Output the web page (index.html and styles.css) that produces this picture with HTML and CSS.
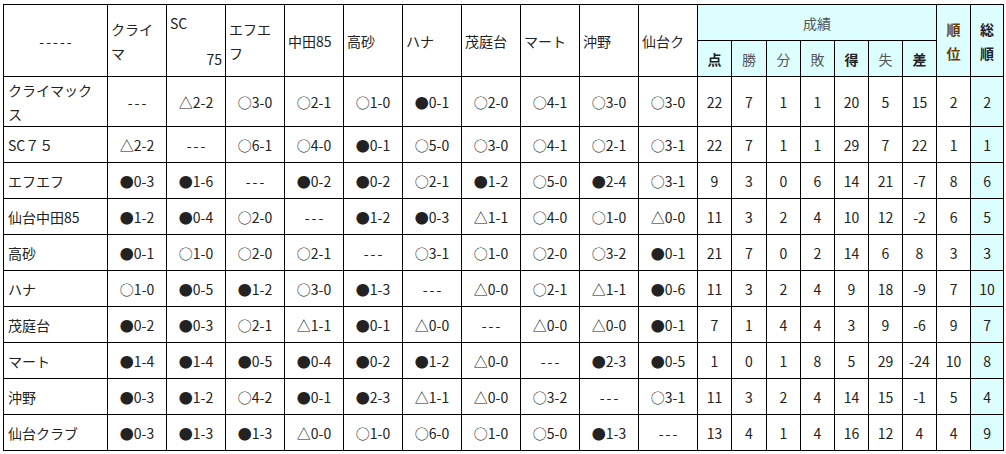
FILE: index.html
```html
<!DOCTYPE html>
<html lang="ja">
<head>
<meta charset="utf-8">
<title>成績表</title>
<link rel="stylesheet" href="styles.css">
</head>
<body>
<table class="sheet">
  <colgroup>
    <col class="c-name">
    <col class="c-team"><col class="c-team"><col class="c-team"><col class="c-team"><col class="c-team">
    <col class="c-team"><col class="c-team"><col class="c-team"><col class="c-team"><col class="c-team">
    <col class="c-stat"><col class="c-stat2"><col class="c-stat"><col class="c-stat"><col class="c-stat"><col class="c-stat"><col class="c-stat">
    <col class="c-stat"><col class="c-last">
  </colgroup>
  <thead>
    <tr class="h1">
      <th rowspan="2" class="corner"><span class="dash">-----</span></th>
      <th rowspan="2" class="team">クライ<br>マ</th>
      <th rowspan="2" class="team"><span class="sc-top">SC</span><span class="sc-bot">75</span></th>
      <th rowspan="2" class="team">エフエ<br>フ</th>
      <th rowspan="2" class="team">中田85</th>
      <th rowspan="2" class="team">高砂</th>
      <th rowspan="2" class="team">ハナ</th>
      <th rowspan="2" class="team">茂庭台</th>
      <th rowspan="2" class="team">マート</th>
      <th rowspan="2" class="team">沖野</th>
      <th rowspan="2" class="team">仙台ク</th>
      <th colspan="7" class="cy light">成績</th>
      <th rowspan="2" class="cy rank">順<br>位</th>
      <th rowspan="2" class="cy total">総<br>順</th>
    </tr>
    <tr class="h2">
      <th class="cy bold">点</th>
      <th class="cy light">勝</th>
      <th class="cy light">分</th>
      <th class="cy light">敗</th>
      <th class="cy bold">得</th>
      <th class="cy light">失</th>
      <th class="cy bold">差</th>
    </tr>
  </thead>
  <tbody>
    <tr class="first">
      <td class="name">クライマック<br>ス</td>
      <td><span class="dash">---</span></td><td>△2-2</td><td>○3-0</td><td>○2-1</td><td>○1-0</td><td>●0-1</td><td>○2-0</td><td>○4-1</td><td>○3-0</td><td>○3-0</td>
      <td>22</td><td>7</td><td>1</td><td>1</td><td>20</td><td>5</td><td>15</td><td>2</td><td class="cy">2</td>
    </tr>
    <tr>
      <td class="name">SC７５</td>
      <td>△2-2</td><td><span class="dash">---</span></td><td>○6-1</td><td>○4-0</td><td>●0-1</td><td>○5-0</td><td>○3-0</td><td>○4-1</td><td>○2-1</td><td>○3-1</td>
      <td>22</td><td>7</td><td>1</td><td>1</td><td>29</td><td>7</td><td>22</td><td>1</td><td class="cy">1</td>
    </tr>
    <tr>
      <td class="name">エフエフ</td>
      <td>●0-3</td><td>●1-6</td><td><span class="dash">---</span></td><td>●0-2</td><td>●0-2</td><td>○2-1</td><td>●1-2</td><td>○5-0</td><td>●2-4</td><td>○3-1</td>
      <td>9</td><td>3</td><td>0</td><td>6</td><td>14</td><td>21</td><td>-7</td><td>8</td><td class="cy">6</td>
    </tr>
    <tr>
      <td class="name">仙台中田85</td>
      <td>●1-2</td><td>●0-4</td><td>○2-0</td><td><span class="dash">---</span></td><td>●1-2</td><td>●0-3</td><td>△1-1</td><td>○4-0</td><td>○1-0</td><td>△0-0</td>
      <td>11</td><td>3</td><td>2</td><td>4</td><td>10</td><td>12</td><td>-2</td><td>6</td><td class="cy">5</td>
    </tr>
    <tr>
      <td class="name">高砂</td>
      <td>●0-1</td><td>○1-0</td><td>○2-0</td><td>○2-1</td><td><span class="dash">---</span></td><td>○3-1</td><td>○1-0</td><td>○2-0</td><td>○3-2</td><td>●0-1</td>
      <td>21</td><td>7</td><td>0</td><td>2</td><td>14</td><td>6</td><td>8</td><td>3</td><td class="cy">3</td>
    </tr>
    <tr>
      <td class="name">ハナ</td>
      <td>○1-0</td><td>●0-5</td><td>●1-2</td><td>○3-0</td><td>●1-3</td><td><span class="dash">---</span></td><td>△0-0</td><td>○2-1</td><td>△1-1</td><td>●0-6</td>
      <td>11</td><td>3</td><td>2</td><td>4</td><td>9</td><td>18</td><td>-9</td><td>7</td><td class="cy">10</td>
    </tr>
    <tr>
      <td class="name">茂庭台</td>
      <td>●0-2</td><td>●0-3</td><td>○2-1</td><td>△1-1</td><td>●0-1</td><td>△0-0</td><td><span class="dash">---</span></td><td>△0-0</td><td>△0-0</td><td>●0-1</td>
      <td>7</td><td>1</td><td>4</td><td>4</td><td>3</td><td>9</td><td>-6</td><td>9</td><td class="cy">7</td>
    </tr>
    <tr>
      <td class="name">マート</td>
      <td>●1-4</td><td>●1-4</td><td>●0-5</td><td>●0-4</td><td>●0-2</td><td>●1-2</td><td>△0-0</td><td><span class="dash">---</span></td><td>●2-3</td><td>●0-5</td>
      <td>1</td><td>0</td><td>1</td><td>8</td><td>5</td><td>29</td><td>-24</td><td>10</td><td class="cy">8</td>
    </tr>
    <tr>
      <td class="name">沖野</td>
      <td>●0-3</td><td>●1-2</td><td>○4-2</td><td>●0-1</td><td>●2-3</td><td>△1-1</td><td>△0-0</td><td>○3-2</td><td><span class="dash">---</span></td><td>○3-1</td>
      <td>11</td><td>3</td><td>2</td><td>4</td><td>14</td><td>15</td><td>-1</td><td>5</td><td class="cy">4</td>
    </tr>
    <tr>
      <td class="name">仙台クラブ</td>
      <td>●0-3</td><td>●1-3</td><td>●1-3</td><td>△0-0</td><td>○1-0</td><td>○6-0</td><td>○1-0</td><td>○5-0</td><td>●1-3</td><td><span class="dash">---</span></td>
      <td>13</td><td>4</td><td>1</td><td>4</td><td>16</td><td>12</td><td>4</td><td>4</td><td class="cy">9</td>
    </tr>
  </tbody>
</table>
</body>
</html>
```
FILE: styles.css
```css
html, body {
  margin: 0;
  padding: 0;
  background: #ffffff;
}

body {
  padding: 4px 0 0 3px;
  font-family: "Noto Sans CJK JP", "Noto Sans", sans-serif;
  font-size: 14px;
  color: #222;
}

.sheet {
  border-collapse: collapse;
  table-layout: fixed;
  width: 1000px;
}

.c-name { width: 104px; }
.c-team { width: 59px; }
.c-stat { width: 34px; }
.c-stat2 { width: 35px; }
.c-last { width: 33px; }

.sheet th,
.sheet td {
  border: 1px solid #000;
  padding: 0 3px;
  line-height: 24px;
  white-space: nowrap;
  overflow: hidden;
  vertical-align: middle;
}

.sheet th {
  font-weight: normal;
}

.sheet thead tr { height: 36px; }
.sheet tbody tr { height: 36px; }
.sheet tbody tr.first { height: 50px; }

.sheet td {
  text-align: center;
  padding: 0 1px;
}

.sheet td.name {
  text-align: left;
  padding-left: 4px;
}

.dash {
  letter-spacing: 2px;
  margin-right: -2px;
}

.corner {
  text-align: center;
}

.team {
  text-align: left;
}

.sc-top {
  display: block;
}

.sc-bot {
  display: block;
  text-align: right;
  margin-top: 12px;
}

.cy {
  background: #ddfeff;
}

.sheet th.cy {
  text-align: center;
  padding: 0;
}

.sheet th.light {
  color: #555;
}

.sheet th.bold {
  font-weight: bold;
  color: #222;
}

.sheet th.rank {
  font-weight: bold;
  color: #6b3d00;
}

.sheet th.total {
  font-weight: bold;
  color: #1c1c2e;
}
```
